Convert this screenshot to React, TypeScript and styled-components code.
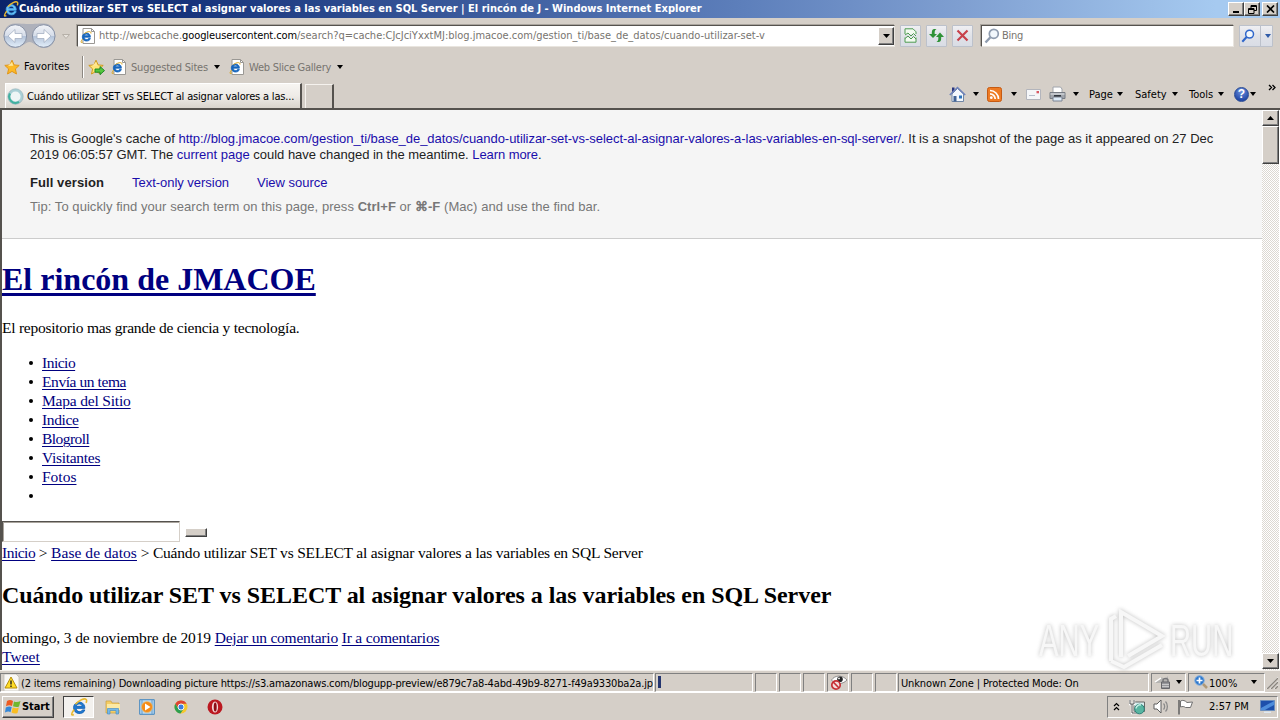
import React from "react";
import styled, { createGlobalStyle, css } from "styled-components";

const face = "#d5cfc8";
const ui = `"DejaVu Sans Condensed", "DejaVu Sans", sans-serif`;

const Global = createGlobalStyle`
  * { box-sizing: border-box; }
  html, body { margin: 0; padding: 0; overflow: hidden; }
  svg { display: block; flex: none; }
`;

const Desktop = styled.div`
  width: 1280px; height: 720px; display: flex; flex-direction: column;
  background: ${face}; position: relative; overflow: hidden;
  font: 11px/14px ${ui}; color: #000; white-space: nowrap;
`;

const raised = css`
  background: ${face};
  border: 1px solid; border-color: #fff #404040 #404040 #fff;
  box-shadow: inset -1px -1px 0 #808080;
`;
const sunken = css`border: 1px solid; border-color: #808080 #fff #fff #808080;`;

const Label = styled.span<{ $w?: number; $ls?: number; $c?: string; $b?: boolean; $down?: number }>`
  flex: none;
  width: ${p => (p.$w ? p.$w + "px" : "auto")};
  letter-spacing: ${p => p.$ls ?? 0}px;
  color: ${p => p.$c ?? "inherit"};
  font-weight: ${p => (p.$b ? 700 : 400)};
  padding-top: ${p => p.$down ?? 0}px;
`;

const TitleBar = styled.header`
  height: 18px; display: flex; align-items: center; padding: 0 2px 0 3px; color: #fff;
  background: linear-gradient(90deg, #0a246a 0%, #17347c 15%, #5d7fbb 58%, #7f9fd1 75%, #a6caf0 95%);
`;
const Spacer = styled.div`flex: 1;`;
const Gap = styled.div<{ $w: number }>`flex: none; width: ${p => p.$w}px;`;

const CaptionButton = styled.div<{ $gap?: boolean }>`
  ${raised} width: 16px; height: 14px; margin-left: ${p => (p.$gap ? 2 : 0)}px;
  display: flex; align-items: center; justify-content: center;
`;

const AddressBar = styled.div`height: 33px; display: flex; align-items: center; padding: 2px 7px 0 2px;`;
const Field = styled.div<{ $w: number }>`
  width: ${p => p.$w}px; height: 22px; flex: none; background: #fff; display: flex; align-items: center;
  border: 1px solid; border-color: #55524e #e9e5df #e9e5df #55524e;
  box-shadow: -1px -1px 0 #a9a49d;
  padding-left: 2px; overflow: hidden;
`;
const Combo = styled.div`${raised} width: 16px; height: 18px; display: flex; align-items: center; justify-content: center;`;
const GlassButton = styled.div<{ $w?: number; $ml?: number }>`
  width: ${p => p.$w ?? 21}px; height: 22px; margin-left: ${p => p.$ml ?? 5}px; flex: none;
  border: 1px solid #bcc1cb; border-radius: 1px;
  background: linear-gradient(#efeff2, #e0e2e8 50%, #d9dde5);
  display: flex; align-items: center; justify-content: center;
`;
const Split = styled.div`width: 1px; height: 20px; background: #bcc1cb; margin: 0 4px 0 5px;`;

const FavoritesBar = styled.div`height: 32px; display: flex; align-items: center; padding-left: 4px;`;
const Divider = styled.div`width: 2px; height: 22px; border-left: 1px solid #8c8781; border-right: 1px solid #fff;`;

const TabRow = styled.div`height: 25px; display: flex; align-items: flex-end; padding-left: 5px;`;
const Tab = styled.div`
  width: 297px; height: 25px; display: flex; align-items: center; padding-left: 1px; flex: none;
  background: linear-gradient(#f7f5f2, #eeebe7 50%, #d9d4cd); border-right: 2px solid #55524e;
  border-top: 1px solid #fff; border-left: 1px solid #fff;
`;
const NewTab = styled.div`
  width: 29px; height: 24px; margin-left: 3px; border-top: 1px solid #f5f2ee; border-left: 1px solid #f5f2ee;
  border-right: 2px solid #55524e; flex: none;
`;
const Commands = styled.div`height: 25px; display: flex; align-items: center; padding-bottom: 3px;`;
const Chevron = styled.div`align-self: flex-start; height: 12px; width: 8px; padding-top: 1px;`;

const Viewport = styled.main`
  height: 562px; display: flex; background: #fff; border-top: 2px solid #55524e; border-left: 2px solid #55524e;
  padding-right: 1px;
`;
const Page = styled.div`
  flex: 1; overflow: hidden; font: 15.5px/19px "Liberation Serif", serif; letter-spacing: -0.19px; color: #000;
`;
const ScrollBar = styled.div`
  width: 17px; display: flex; flex-direction: column; padding-bottom: 1px;
  background: repeating-conic-gradient(#fff 0 25%, #dcd8d2 0 50%) 0 0 / 2px 2px;
`;
const ScrollButton = styled.div`${raised} height: 16px; flex: none; display: flex; align-items: center; justify-content: center;`;
const Thumb = styled.div`${raised} height: 38px; flex: none;`;

const CacheBanner = styled.section`
  height: 129px; background: #f5f5f5; border-bottom: 1px solid #ccc; padding: 21px 0 0 28px;
  font: 13px/16px "Liberation Sans", sans-serif; letter-spacing: 0; color: #222;
`;
const Blue = styled.span<{ $ls?: number }>`color: #1a0dab; letter-spacing: ${p => p.$ls ?? 0}px;`;
const BannerLine = styled.div<{ $mt?: number; $ls?: number; $c?: string }>`
  margin-top: ${p => p.$mt ?? 0}px; letter-spacing: ${p => p.$ls ?? 0}px; color: ${p => p.$c ?? "#222"}; height: 16px;
  display: block; white-space: pre;
`;
const Modes = styled.div`display: flex; margin-top: 12px; height: 16px;`;

const Link = styled.a<{ $ls?: number }>`
  color: #000080; letter-spacing: ${p => p.$ls ?? -0.19}px;
  text-decoration: underline; text-underline-offset: 2px; text-decoration-thickness: 1px;
`;
const SiteTitle = styled.h1`
  margin: 22px 0 0; font-size: 32px; line-height: 37px; height: 37px; letter-spacing: 0;
  color: #000080; text-decoration: underline; text-decoration-thickness: 3px; text-underline-offset: 3px;
`;
const Tagline = styled.p`margin: 20px 0 0; letter-spacing: -0.25px;`;
const Menu = styled.ul`margin: 16px 0 0; padding: 0 0 0 40px; list-style: none;`;
const Item = styled.li`
  height: 19px; display: flex; align-items: center;
  &::before { content: ""; width: 4px; height: 4px; border-radius: 2px; background: #000; margin: 1px 9px 0 -13px; }
`;
const SearchForm = styled.div`display: flex; align-items: flex-start; margin-top: 16px; height: 22px;`;
const SearchInput = styled.div`
  width: 178px; height: 21px; border: 1px solid; border-color: #55524e #d5cfc8 #d5cfc8 #55524e;
  box-shadow: inset 1px 1px 0 #a9a49d;
`;
const EmptyButton = styled.div`${raised} width: 22px; height: 9px; margin: 7px 0 0 5px;`;
const Line = styled.div<{ $ls?: number }>`height: 19px; letter-spacing: ${p => p.$ls ?? -0.19}px;`;
const ArticleTitle = styled.h2`margin: 19px 0 19px; font-size: 24px; line-height: 28px; letter-spacing: -0.05px;`;

const StatusBar = styled.footer`height: 22px; display: flex; align-items: center; padding-top: 1px; border-top: 1px solid #f5f2ee;`;
const Pane = styled.div<{ $w: number; $ml?: number }>`
  ${sunken} flex: none; width: ${p => p.$w}px; height: 19px; margin-left: ${p => p.$ml ?? 2}px;
  display: flex; align-items: center; padding-left: 2px; overflow: hidden;
`;
const Progress = styled.div`width: 3px; height: 12px; background: #24356f;`;

const TaskBar = styled.nav`
  height: 26px; display: flex; align-items: center; border-top: 1px solid #fff; padding: 2px 2px 0;
`;
const StartButton = styled.div`${raised} width: 52px; height: 22px; display: flex; align-items: center; padding-left: 2px; gap: 0;`;
const ActiveTask = styled.div`
  width: 31px; height: 22px; margin: 0 0 0 9px; background: #f3f1ee; border: 1px solid; border-color: #404040 #fff #fff #404040;
  display: flex; align-items: center; justify-content: center;
`;
const Tray = styled.div`${sunken} width: 171px; height: 22px; display: flex; align-items: center; padding-left: 5px;`;

const Watermark = styled.div`
  position: absolute; left: 1039px; top: 607px; display: flex; align-items: center; height: 66px;
  filter: drop-shadow(0 0 2px rgba(110,110,110,.45));
`;
const Word = styled.span<{ $w: number }>`
  width: ${p => p.$w}px; font: 45px/46px "Liberation Sans", sans-serif; color: #f7f7f7;
  transform: scaleX(.65); transform-origin: 0 50%; padding-top: 2px;
`;

const Down = ({ s = 7, c = "#000" }: { s?: number; c?: string }) => (
  <svg width={s} height={4} viewBox="0 0 7 4" preserveAspectRatio="none"><path d="M0 0H7L3.5 4Z" fill={c} /></svg>
);
const Up = () => <svg width="7" height="4" viewBox="0 0 7 4"><path d="M0 4H7L3.5 0Z" /></svg>;

const IE = ({ s = 16, light }: { s?: number; light?: boolean }) => (
  <svg width={s} height={s} viewBox="0 0 16 16" fill="none">
    <path d="M13.2 9.2H5.5C5.7 13 10.4 12.7 11 10.6H13.2C12 15.2 3.2 15 3.2 8.600C3.2 2.200 13.400 1.700 13.200 9.200ZM5.600 7.400H10.800C10.500 4.600 6.200 4.500 5.600 7.400Z" fill={light ? "#6cc4f5" : "#1f79d0"} stroke={light ? "#49a9ec" : "#1261b5"} strokeWidth={light ? 0.9 : 0.8} />
    <path d="M3.7 10.2C.8 14.2.8 16 3.4 14.7M4.8 5.6C8 2.1 12.8-.3 14.4 1.3C15 2 14.8 3.2 14.2 4.4" stroke="#e9b931" strokeWidth="1.4" />
  </svg>
);
const IEPage = () => (
  <svg width="16" height="16" viewBox="0 0 16 16" fill="none">
    <path d="M3 .5H11.5L14.5 3.5V15.5H3Z" fill="#fff" stroke="#9a9894" />
    <path d="M11.5.5V3.5H14.5" stroke="#9a9894" />
    <path d="M10.4 9.2H4.3C4.4 12.2 8 12 8.5 10.5H10.4C9.5 14.2 2.3 14 2.3 8.9C2.3 3.8 10.8 3.8 10.4 9.2ZM4.4 7.7H8.4C8.1 5.7 5 5.6 4.4 7.7Z" fill="#1766bd" stroke="#1766bd" strokeWidth=".8" />
    <path d="M2.6 11C.3 14 .7 15.3 2.8 14M4.4 5.5C7.5 3.2 11.5 2.8 11 5.5" stroke="#d9a520" />
  </svg>
);
const Star = ({ add }: { add?: boolean }) => (
  <svg width="17" height="17" viewBox="0 0 17 17">
    <path d="M8 1.2L10.1 5.9L15.2 6.4L11.4 9.9L12.5 15L8 12.4L3.5 15L4.6 9.9L.8 6.4L5.9 5.9Z" fill={add ? "#ffe476" : "#fdb925"} stroke={add ? "#cf9a1f" : "#e0961a"} strokeLinejoin="round" />
    <path d="M8 3L9.3 6.8L4 7Z" fill="#ffe795" />
    {add && <path d="M7 10H12V7.5L16.5 11.6L12 15.7V13.2H7Z" fill="#54c63e" stroke="#168221" strokeWidth=".9" />}
  </svg>
);
const NavButtons = () => (
  <svg width="72" height="28" viewBox="0 0 72 28" fill="none">
    <defs>
      <linearGradient id="orb" x2="0" y2="1"><stop stopColor="#f2f4f8" /><stop offset=".48" stopColor="#d6dde9" /><stop offset=".52" stopColor="#b5c4da" /><stop offset="1" stopColor="#e3effa" /></linearGradient>
    </defs>
    <path d="M13 1.500C20 1.500 22 2 27.500 2C33 2 35 1.500 42 1.500C57 1.500 57 26 42 26C35 26 32 20 27.500 20C23 20 20 26 13 26C-2 26-2 1.500 13 1.500Z" fill="#aeb1bb" />
    <circle cx="13.300" cy="14" r="11.300" fill="url(#orb)" stroke="#8791a5" />
    <circle cx="41.700" cy="14" r="11.300" fill="url(#orb)" stroke="#8791a5" />
    <path d="M6 14L13 7.500V11.500H20V16.500H13V20.500Z" fill="#fff" stroke="#a4b0c3" strokeWidth=".8" />
    <path d="M49 14L42 7.500V11.500H35V16.500H42V20.500Z" fill="#fff" stroke="#a4b0c3" strokeWidth=".8" />
    <path d="M60.500 12.500H67.500L64 16.500Z" fill="#e8e4de" stroke="#b6b0a8" />
  </svg>
);
const Spinner = () => (
  <svg width="17" height="17" viewBox="0 0 17 17" fill="none">
    <circle cx="8.500" cy="8.500" r="6.300" fill="#eef5f6" stroke="#a9cfd6" strokeWidth="2.400" />
    <path d="M3 5.500A6.300 6.300 0 0 0 12 13.800" stroke="#40b3a0" strokeWidth="2.200" />
    <circle cx="8.500" cy="8.500" r="7.700" stroke="#7fa6b2" strokeWidth=".6" />
  </svg>
);
const Broken = () => (
  <svg width="13" height="15" viewBox="0 0 13 15" fill="none" stroke="#4c9a50">
    <path d="M1 6V.8H9L12 3.800V6M1 9.500V14.200H12V9.500" fill="#f2faf0" /><path d="M1 7L4 5L7 8L9.500 5.500L12 8M1 10.500L4 8L7 11L9.500 8.500L12 11" />
  </svg>
);
const Refresh = () => (
  <svg width="15" height="15" viewBox="0 0 15 15" fill="#2f9237">
    <path d="M5 1H7.500C5.500 2 5.600 4 5.700 6H8L4 10L0 6H2.800C2.800 3 3 1.500 5 1Z" /><path d="M10 14H7.500C9.500 13 9.400 11 9.300 9H7L11 4.500L15 9H12.200C12.200 12 12 13.500 10 14Z" />
  </svg>
);
const Stop = () => (
  <svg width="13" height="13" viewBox="0 0 13 13" stroke="#c8414b" strokeWidth="2.200"><path d="M1.500 1.500L11.500 11.500M11.500 1.500L1.500 11.500" /></svg>
);
const Lens = ({ c, s = 16 }: { c: string; s?: number }) => (
  <svg width={s} height={s} viewBox="0 0 16 16" fill="none" stroke={c}>
    <circle cx="9.800" cy="5.800" r="4.500" strokeWidth="1.700" fill="#f2f7fc" /><path d="M6.400 9.200L1.500 14.500" strokeWidth="2.400" />
  </svg>
);
const Home = () => (
  <svg width="17" height="17" viewBox="0 0 17 17">
    <path d="M3 8V15.500H14.500V8L8.500 2.500Z" fill="#f4f8fd" stroke="#7187a6" /><path d="M3 1.500H5.500V5L3 7Z" fill="#28357f" />
    <path d="M.8 9L8.500 1.500L16.200 9" fill="none" stroke="#6f83ba" strokeWidth="1.600" /><path d="M4.500 10H7.500V15.500H4.500Z" fill="#426394" /><path d="M10 9.500H13V12.500H10Z" fill="#2f74bb" />
  </svg>
);
const Rss = () => (
  <svg width="15" height="15" viewBox="0 0 15 15" fill="none" stroke="#fff" strokeWidth="1.700">
    <rect x=".5" y=".5" width="14" height="14" rx="2" fill="#ee7b24" stroke="#c65b13" strokeWidth="1" />
    <path d="M3 6.800A5.200 5.200 0 0 1 8.200 12M3 3.500A8.500 8.500 0 0 1 11.500 12" /><circle cx="4.300" cy="10.700" r="1.400" fill="#fff" stroke="none" />
  </svg>
);
const Mail = () => (
  <svg width="15" height="11" viewBox="0 0 15 11"><path d="M.5.5H14.500V10.500H.5Z" fill="#f5f6f8" stroke="#b3b5bc" /><path d="M10.500 2H13V4.300H10.500Z" fill="#d85863" /><path d="M3 6.500H9" stroke="#b6bdca" /></svg>
);
const Printer = () => (
  <svg width="17" height="16" viewBox="0 0 17 16"><path d="M4 1H11.500L13 3V7H4Z" fill="#fff" stroke="#a0a4ac" /><path d="M1 6.500H16V12.500H1Z" fill="#a2a6ad" stroke="#777c84" /><path d="M1.500 8H15.500" stroke="#e2e5e9" /><path d="M4 11H13V15H4Z" fill="#dceaf7" stroke="#7c8492" /><path d="M5 9.800H12" stroke="#2c3139" strokeWidth="1.500" /></svg>
);
const HelpOrb = styled.div`
  width: 15px; height: 15px; border-radius: 8px; background: radial-gradient(circle at 50% 25%, #6f93df, #2349a8 75%);
  border: 1px solid #284a94; color: #fff; font: bold 12px/13px "Liberation Sans", sans-serif; text-align: center;
`;
const Warning = () => (
  <svg width="17" height="17" viewBox="0 0 17 17"><path d="M1 0H13L16 3V17H1Z" fill="#f9f8f5" stroke="#bbb8b2" strokeWidth=".7" /><path d="M8 3L14 14H2Z" fill="#ffdd28" stroke="#b48c0b" strokeLinejoin="round" /><path d="M8 6.500V10.500M8 11.500V13" stroke="#222" strokeWidth="1.400" /></svg>
);
const Privacy = () => (
  <svg width="18" height="17" viewBox="0 0 18 17" fill="none"><path d="M1.500 6C5 .8 12.500.8 17 6C12.500 10.800 5 10.800 1.500 6Z" fill="#fff" stroke="#777" strokeWidth=".8" /><circle cx="10" cy="5.200" r="2.800" fill="#262626" /><circle cx="9" cy="4.400" r=".9" fill="#fff" /><circle cx="6" cy="11" r="4.200" fill="#f4dddd" stroke="#c62f35" strokeWidth="1.700" /><path d="M3.200 8L9 14" stroke="#c62f35" strokeWidth="1.700" /></svg>
);
const Filter = () => (
  <svg width="17" height="16" viewBox="0 0 17 16" fill="none"><path d="M1 9L8 3L10 6L14 2V9H6Z" fill="#b5b4b2" /><path d="M1 8L7 4" stroke="#fff" strokeWidth="1.500" /><path d="M9 8V6.500C9 3.800 14 3.800 14 6.500V8" stroke="#77777a" strokeWidth="1.500" /><path d="M7.500 8H15.500V14.500H7.500Z" fill="#96969a" stroke="#66666a" /><path d="M8 10.500H15M8 12.500H15" stroke="#ddd" strokeWidth=".7" /></svg>
);
const Zoom = () => (
  <svg width="14" height="14" viewBox="0 0 14 14" fill="none"><circle cx="5.500" cy="5.500" r="4.700" fill="#2f79cd" stroke="#7dabde" /><path d="M5.500 2.500V8.500M2.500 5.500H8.500" stroke="#fff" strokeWidth="1.700" /><path d="M9 9L13 13" stroke="#b09a78" strokeWidth="2.500" /></svg>
);
const Grip = () => (
  <svg width="13" height="13" viewBox="0 0 13 13"><path d="M1 13L13 1M5 13L13 5M9 13L13 9" stroke="#fff" strokeWidth="1" /><path d="M2 13L13 2M6 13L13 6M10 13L13 10" stroke="#8b867f" strokeWidth="1.500" /></svg>
);
const Flag = () => (
  <svg width="17" height="17" viewBox="0 0 17 17"><path d="M2 3C4.500 1.500 6 2 8 3L7 8C5 7 3.500 7 1 8.200Z" fill="#ed5b21" /><path d="M9 3.400C11 4.200 13 4.300 15.500 3L14 8.500C12 9.500 10 9 8 8.300Z" fill="#71b72f" /><path d="M.8 9.400C3.300 8.200 5 8.200 6.700 9L5.500 14.200C4 13 2 13.500 0 14.500Z" fill="#3387d8" /><path d="M7.700 9.500C10 10.200 11.800 10.500 13.800 9.600L12.500 15C10.500 16 8.600 15.600 6.500 14.500Z" fill="#f9bd22" /></svg>
);
const Folder = () => (
  <svg width="16" height="16" viewBox="0 0 16 16"><path d="M1 2H6L7 4H14V14H1Z" fill="#f4cd65" stroke="#c79d3f" strokeWidth=".7" /><path d="M2 5H15V11H2Z" fill="#fbe9a4" /><path d="M2.500 15V9.500H13.500V15H11V11.500H5V15Z" fill="#74b8e8" stroke="#4b91c5" strokeWidth=".7" /></svg>
);
const Media = () => (
  <svg width="16" height="16" viewBox="0 0 16 16"><path d="M.7.700H15.300V15.300H.7Z" fill="#b8d8f2" stroke="#4487bf" /><path d="M3 1V15M13 1V15" stroke="#649cc9" /><circle cx="8" cy="8" r="5.500" fill="#f58b16" stroke="#e6c17a" strokeWidth=".7" /><path d="M6 4.500L11.500 8L6 11.500Z" fill="#fff" /></svg>
);
const Chrome = () => (
  <svg width="14" height="14" viewBox="0 0 14 14"><circle cx="7" cy="7" r="6.500" fill="#f5c82e" /><path d="M1.300 3.800A6.500 6.500 0 0 1 12.700 3.800H7A3.200 3.200 0 0 0 4 8Z" fill="#dd4334" /><path d="M1.300 3.800A6.500 6.500 0 0 0 6.500 13.500L9.500 9L4 8Z" fill="#2c9e50" /><circle cx="7" cy="7" r="3" fill="#3b7de0" stroke="#fff" strokeWidth=".9" /></svg>
);
const Opera = () => (
  <svg width="16" height="16" viewBox="0 0 16 16"><circle cx="8" cy="8" r="7.500" fill="#bb1820" /><ellipse cx="8" cy="8" rx="3.100" ry="5.500" fill="#f4d8d8" /><ellipse cx="8.200" cy="8" rx="1.500" ry="4.600" fill="#8d0d15" /></svg>
);
const Network = () => (
  <svg width="17" height="16" viewBox="0 0 17 16" fill="none"><path d="M5 3H15.500V12.500H5Z" fill="#d9eeee" stroke="#666" /><path d="M1 1V5H5V1M3 5V14H8" stroke="#fff" strokeWidth="2.300" /><path d="M1 1V5H5V1M3 5V14H8" stroke="#555" strokeWidth="1" /><circle cx="10.500" cy="10" r="4.800" fill="#58b5a1" stroke="#2e8279" /><path d="M7 9.500A4 4 0 0 1 12 6" stroke="#c0eee3" strokeWidth="1.500" /></svg>
);
const Speaker = () => (
  <svg width="17" height="15" viewBox="0 0 17 15" fill="none"><path d="M1 5H4L8 1V14L4 10H1Z" fill="#fff" stroke="#5f5f5f" /><path d="M10.500 4.500C12 6 12 9 10.500 10.500M12.500 2.500C15 5 15 10 12.500 12.500" stroke="#8a8a8a" strokeWidth="1.300" /></svg>
);
const Notice = () => (
  <svg width="17" height="16" viewBox="0 0 17 16"><path d="M2 1V15.500" stroke="#666" strokeWidth="1.600" /><path d="M3.500 2C6 .8 8 1.500 10 3.500L15.500 3L13.500 8.500L8.500 8.500C7 7.300 5.500 7.300 3.500 8Z" fill="#fff" stroke="#707070" /></svg>
);
const Monitor = () => (
  <svg width="15" height="13" viewBox="0 0 15 13"><path d="M.5.500H14.500V10.500H.5Z" fill="#1d4fab" stroke="#6d8fbe" /><path d="M1 8L14 1V5L5 10H1Z" fill="#4e8ddb" /><path d="M4 11.500H11V13H4Z" fill="#dfe8f1" /></svg>
);

const menu: [string, number][] = [
  ["Inicio", -0.5], ["Envía un tema", -0.42], ["Mapa del Sitio", -0.19], ["Indice", -0.35],
  ["Blogroll", -0.55], ["Visitantes", -0.29], ["Fotos", 0],
];

export default function App() {
  return (
    <Desktop>
      <Global />
      <TitleBar>
        <IE s={16} light />
        <Label $b>Cuándo utilizar SET vs SELECT al asignar valores a las variables en SQL Server | El rincón de J - Windows Internet Explorer</Label>
        <Spacer />
        <CaptionButton><svg width="8" height="8"><path d="M1 6H7V8H1Z" /></svg></CaptionButton>
        <CaptionButton><svg width="9" height="9" fill="none" stroke="#000"><path d="M3 3V.5H8.500V5.500H6M3 1.500H8.500M.5 3.500H6V8.500H.5ZM.5 4.500H6" /></svg></CaptionButton>
        <CaptionButton $gap><svg width="9" height="8" stroke="#000" strokeWidth="1.700"><path d="M1 .5L8 7.500M8 .5L1 7.500" /></svg></CaptionButton>
      </TitleBar>

      <AddressBar>
        <NavButtons /><Gap $w={3} />
        <Field $w={818}>
          <IEPage /><Gap $w={3} />
          <Label $c="#77746f" $ls={-0.01} $down={1}>http://webcache.<Label $c="#000" $ls={-0.1}>googleusercontent.com</Label>/search?q=cache:CJcJciYxxtMJ:blog.jmacoe.com/gestion_ti/base_de_datos/cuando-utilizar-set-v</Label>
          <Spacer /><Combo><Down /></Combo>
        </Field>
        <GlassButton><Broken /></GlassButton>
        <GlassButton><Refresh /></GlassButton>
        <GlassButton><Stop /></GlassButton>
        <Gap $w={8} />
        <Field $w={253}><Lens c="#8f9caf" /><Gap $w={2} /><Label $c="#77746f" $ls={-0.3} $down={1}>Bing</Label></Field>
        <GlassButton $w={34} $ml={5}><Lens c="#2f66ca" s={14} /><Split /><Down s={6} c="#2f5ba8" /></GlassButton>
      </AddressBar>

      <FavoritesBar>
        <Star /><Gap $w={3} /><Label $w={58} $ls={0.1}>Favorites</Label>
        <Divider /><Gap $w={4} /><Star add /><Gap $w={6} />
        <IEPage /><Gap $w={4} /><Label $w={83} $c="#77746f" $ls={-0.2} $down={1}>Suggested Sites</Label><Down s={6} /><Gap $w={9} />
        <IEPage /><Gap $w={4} /><Label $w={88} $c="#77746f" $ls={-0.25} $down={1}>Web Slice Gallery</Label><Down s={6} />
      </FavoritesBar>

      <TabRow>
        <Tab><Spinner /><Gap $w={3} /><Label $ls={-0.18} $down={1}>Cuándo utilizar SET vs SELECT al asignar valores a las...</Label></Tab>
        <NewTab />
        <Spacer />
        <Commands>
          <Home /><Gap $w={7} /><Down s={6} /><Gap $w={8} />
          <Rss /><Gap $w={9} /><Down s={6} /><Gap $w={9} />
          <Mail /><Gap $w={8} /><Printer /><Gap $w={7} /><Down s={6} /><Gap $w={10} />
          <Label $w={28} $down={1}>Page</Label><Down s={6} /><Gap $w={12} />
          <Label $w={37} $down={1}>Safety</Label><Down s={6} /><Gap $w={11} />
          <Label $w={29} $down={1}>Tools</Label><Down s={6} /><Gap $w={10} />
          <HelpOrb>?</HelpOrb><Gap $w={1} /><Down s={6} /><Gap $w={12} />
          <Chevron><svg width="8" height="7" fill="none" stroke="#000" strokeWidth="1.300"><path d="M1 1L3.500 3.500L1 6M4.500 1L7 3.500L4.500 6" /></svg></Chevron>
          <Gap $w={4} />
        </Commands>
      </TabRow>

      <Viewport>
        <Page>
          <CacheBanner>
            <BannerLine>This is Google's cache of <Blue $ls={-0.045}>http://blog.jmacoe.com/gestion_ti/base_de_datos/cuando-utilizar-set-vs-select-al-asignar-valores-a-las-variables-en-sql-server/</Blue>. It is a snapshot of the page as it appeared on 27 Dec</BannerLine>
            <BannerLine $ls={-0.02}>2019 06:05:57 GMT. The <Blue>current page</Blue> could have changed in the meantime. <Blue $ls={-0.08}>Learn more</Blue>.</BannerLine>
            <Modes><Label $w={102} $b $ls={0.08}>Full version</Label><Label $w={125} $c="#1a0dab" $ls={-0.03}>Text-only version</Label><Label $c="#1a0dab">View source</Label></Modes>
            <BannerLine $mt={8} $c="#777" $ls={0.055}>Tip: To quickly find your search term on this page, press <b>Ctrl+F</b> or <b>⌘-F</b> (Mac) and use the find bar.</BannerLine>
          </CacheBanner>
          <SiteTitle>El rincón de JMACOE</SiteTitle>
          <Tagline>El repositorio mas grande de ciencia y tecnología.</Tagline>
          <Menu>{menu.map(([m, ls]) => <Item key={m}><Link $ls={ls}>{m}</Link></Item>)}<Item /></Menu>
          <SearchForm><SearchInput /><EmptyButton /></SearchForm>
          <Line><Link $ls={-0.5}>Inicio</Link> &gt; <Link $ls={0.05}>Base de datos</Link> &gt; Cuándo utilizar SET vs SELECT al asignar valores a las variables en SQL Server</Line>
          <ArticleTitle>Cuándo utilizar SET vs SELECT al asignar valores a las variables en SQL Server</ArticleTitle>
          <Line $ls={-0.12}>domingo, 3 de noviembre de 2019 <Link $ls={-0.22}>Dejar un comentario</Link> <Link>Ir a comentarios</Link></Line>
          <Line><Link $ls={0.05}>Tweet</Link></Line>
        </Page>
        <ScrollBar>
          <ScrollButton><Up /></ScrollButton><Thumb /><Spacer /><ScrollButton><Down /></ScrollButton>
        </ScrollBar>
      </Viewport>

      <StatusBar>
        <Pane $w={654} $ml={0}><Warning /><Gap $w={1} /><Label $ls={-0.163} $down={3}>(2 items remaining) Downloading picture https://s3.amazonaws.com/blogupp-preview/e879c7a8-4abd-49b9-8271-f49a9330ba2a.jp</Label></Pane>
        <Pane $w={98} $ml={1}><Progress /></Pane>
        <Pane $w={22} /><Pane $w={22} /><Pane $w={22} />
        <Pane $w={22}><Privacy /></Pane>
        <Pane $w={22} /><Pane $w={22} />
        <Pane $w={251} $ml={1}><Label $ls={-0.13} $down={3}>Unknown Zone | Protected Mode: On</Label></Pane>
        <Pane $w={35}><Filter /><Gap $w={5} /><Down s={6} /></Pane>
        <Pane $w={77}><Gap $w={3} /><Zoom /><Gap $w={1} /><Label $w={42} $down={3}>100%</Label><Down s={6} /></Pane>
        <Grip />
      </StatusBar>

      <TaskBar>
        <StartButton><Flag /><Label $b $ls={-0.1} $down={1}>Start</Label></StartButton>
        <ActiveTask><IE s={18} /></ActiveTask>
        <Gap $w={11} /><Folder /><Gap $w={18} /><Media /><Gap $w={19} /><Chrome /><Gap $w={19} /><Opera />
        <Spacer />
        <Tray>
          <svg width="7" height="9" fill="none" stroke="#000" strokeWidth="1.200"><path d="M1 4L3.500 1.500L6 4M1 8L3.500 5.500L6 8" /></svg>
          <Gap $w={9} /><Network /><Gap $w={7} /><Speaker /><Gap $w={7} /><Notice /><Gap $w={15} />
          <Label $w={51} $down={1}>2:57 PM</Label><Monitor />
        </Tray>
      </TaskBar>

      <Watermark>
        <Word $w={65}>ANY</Word>
        <svg width="66" height="66" viewBox="0 0 66 66" fill="none" stroke="#f7f7f7" strokeWidth="4">
          <path d="M7 54V12L12 9" /><path d="M17 50V5L58 29L24 49" /><path d="M7 54L20 60L58 38" />
        </svg>
        <Word $w={66}>RUN</Word>
      </Watermark>
    </Desktop>
  );
}
